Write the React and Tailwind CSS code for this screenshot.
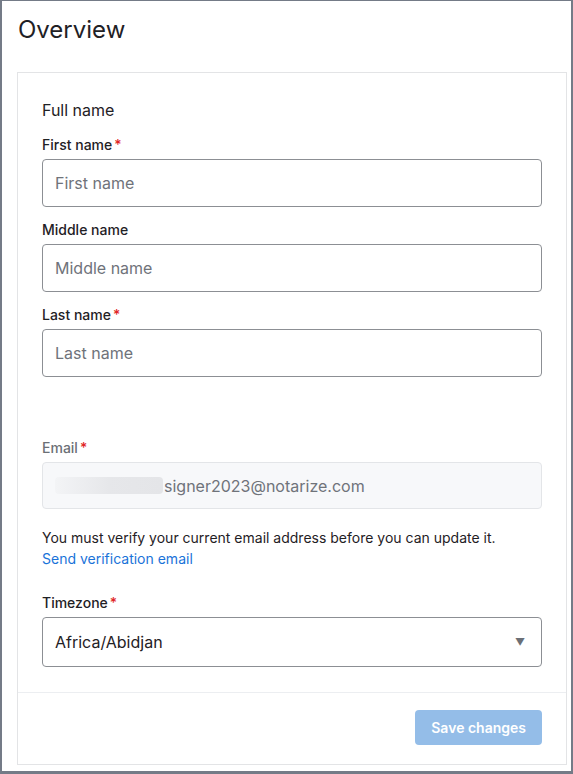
import React from "react";

const Label = ({ children, required, muted }) => (
  <label
    className={`flex items-center text-sm font-medium leading-5 ${
      muted ? "text-[#6b6f76]" : "text-[#1f2125]"
    }`}
  >
    {children}
    {required && <span className="ml-[2px] text-[#e02424]">*</span>}
  </label>
);

const TextField = ({ label, required }) => (
  <div className="flex flex-col gap-1">
    <Label required={required}>{label}</Label>
    <input
      placeholder={label}
      className="h-12 w-full rounded border border-[#8c8f94] bg-white px-3 text-base text-[#1f2125] placeholder:text-[#6f737a] focus:outline-none"
    />
  </div>
);

export default function App() {
  return (
    <div
      className="min-h-[774px] border-l-2 border-r-2 border-t border-b-[3px] border-[#747b87] bg-white"
      style={{ fontFamily: "Inter, 'Noto Sans', sans-serif" }}
    >
      <div className="pl-[15px] pr-[4px] pt-[13px] pb-[6px]">
        <h1 className="pl-[1px] text-2xl leading-8 text-[#1f2125]">Overview</h1>
        <div className="mt-[26px] border border-[#e3e4e6] bg-white">
          <div className="px-6 pt-[25px] pb-[25px]">
            <h2 className="text-base leading-6 text-[#1f2125]">Full name</h2>
            <div className="mt-[13px] flex flex-col gap-[13px]">
              <TextField label="First name" required />
              <TextField label="Middle name" />
              <TextField label="Last name" required />
            </div>

            <div className="mt-[61px] flex flex-col gap-1">
              <Label required muted>
                Email
              </Label>
              <div className="flex h-[47px] items-center rounded border border-[#e3e5e8] bg-[#f7f8fa] px-3 text-base text-[#6f737a]">
                <span className="mr-[1px] h-[17px] w-[108px] rounded-sm bg-gradient-to-r from-[#f3f4f6] via-[#e6e7ea] to-[#e4e5e8]" />
                signer2023@notarize.com
              </div>
            </div>

            <p className="mt-[18px] text-sm leading-[21px] text-[#1f2125]">
              You must verify your current email address before you can update it.
            </p>
            <a className="block text-sm leading-[21px] text-[#1a73d9]" href="#">
              Send verification email
            </a>

            <div className="mt-[24px] flex flex-col gap-1">
              <Label required>Timezone</Label>
              <div className="flex h-[50px] items-center justify-between rounded border border-[#8c8f94] bg-white pl-3 pr-4 text-base text-[#1f2125]">
                <span>Africa/Abidjan</span>
                <span className="text-[10px] text-[#6b6f76]">▼</span>
              </div>
            </div>
          </div>
          <div className="flex justify-end border-t border-[#eceef1] px-6 pt-[17px] pb-[19px]">
            <button className="h-[35px] rounded bg-[#94bde8] px-4 text-sm font-semibold text-white">
              Save changes
            </button>
          </div>
        </div>
      </div>
    </div>
  );
}
